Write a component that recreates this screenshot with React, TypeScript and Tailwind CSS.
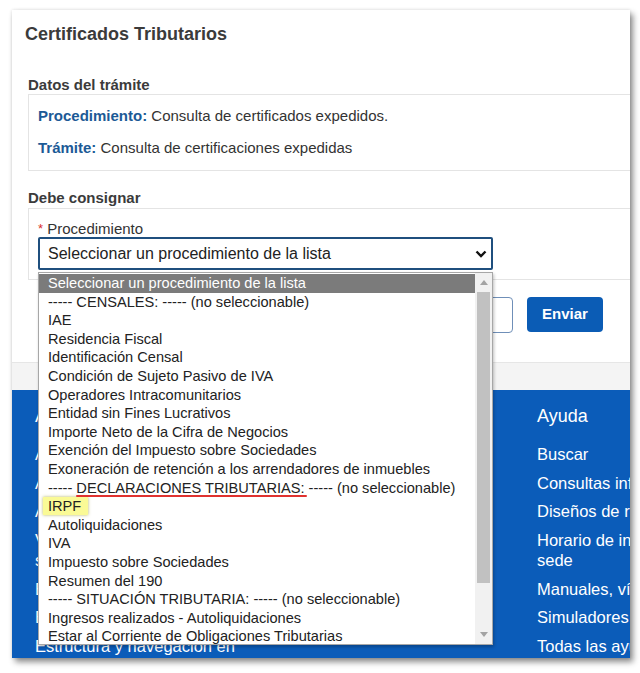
const options: string[] = [
  '----- CENSALES: ----- (no seleccionable)',
  'IAE',
  'Residencia Fiscal',
  'Identificación Censal',
  'Condición de Sujeto Pasivo de IVA',
  'Operadores Intracomunitarios',
  'Entidad sin Fines Lucrativos',
  'Importe Neto de la Cifra de Negocios',
  'Exención del Impuesto sobre Sociedades',
  'Exoneración de retención a los arrendadores de inmuebles',
];

const options2: string[] = [
  'Autoliquidaciones',
  'IVA',
  'Impuesto sobre Sociedades',
  'Resumen del 190',
  '----- SITUACIÓN TRIBUTARIA: ----- (no seleccionable)',
  'Ingresos realizados - Autoliquidaciones',
  'Estar al Corriente de Obligaciones Tributarias',
];

function Row({ children }: { children: React.ReactNode }) {
  return <div className="h-[18.6px] leading-[18.6px] pl-[9px] whitespace-nowrap">{children}</div>;
}

function Dropdown() {
  return (
    <div className="absolute left-[26px] top-[262px] w-[455px] h-[373px] bg-white border border-[#a7a7a7] shadow-[1px_2px_3px_rgba(0,0,0,0.25)] text-[14.6px] text-[#222] overflow-hidden">
      <div className="pt-[1px] pr-[17px]">
        <div className="h-[18.6px] leading-[18.6px] pl-[9px] bg-[#7b7b7b] text-white whitespace-nowrap">
          Seleccionar un procedimiento de la lista
        </div>
        {options.map((o) => (
          <Row key={o}>{o}</Row>
        ))}
        <Row>
          ----- <span className="relative">
            DECLARACIONES TRIBUTARIAS:
            <span className="absolute left-0 right-[-2px] bottom-[-1px] h-[2px] rounded-full bg-[#e0322f]" />
          </span>{' '}
          ----- (no seleccionable)
        </Row>
        <div className="h-[18.6px] leading-[18.6px] pl-[4px]">
          <span className="inline-block h-[18px] leading-[18px] pl-[5px] pr-[7px] bg-[#fafa96] shadow-[0_0_3px_rgba(150,150,40,0.7)]">
            IRPF
          </span>
        </div>
        {options2.map((o) => (
          <Row key={o}>{o}</Row>
        ))}
      </div>
      {/* scrollbar */}
      <div className="absolute right-0 top-0 bottom-0 w-[17px] bg-[#f1f1f1] flex flex-col items-center">
        <div className="h-[19px] flex items-center justify-center">
          <svg width="8" height="5" viewBox="0 0 8 5">
            <path d="M0 5L4 0L8 5Z" fill="#a3a3a3" />
          </svg>
        </div>
        <div className="w-[13px] h-[291px] bg-[#c1c1c1]" />
        <div className="flex-1" />
        <div className="h-[19px] flex items-center justify-center">
          <svg width="8" height="5" viewBox="0 0 8 5">
            <path d="M0 0L8 0L4 5Z" fill="#a3a3a3" />
          </svg>
        </div>
      </div>
    </div>
  );
}

export default function App() {
  return (
    <div className="w-[640px] h-[673px] bg-white overflow-hidden font-['Liberation_Sans',Arial,sans-serif] text-[#333]">
      <div className="relative ml-[12px] mt-[10px] w-[618px] h-[648px] overflow-hidden bg-white shadow-[3px_4px_6px_rgba(0,0,0,0.45),0_0_3px_rgba(0,0,0,0.12)]">
        <div className="w-[760px]">
          <section className="h-[352px] pt-[13px] pl-[16px]">
            <h1 className="-ml-[3px] text-[18px] leading-[22px] font-bold text-[#3b3b3b]">Certificados Tributarios</h1>
            <h2 className="mt-[31px] text-[15px] leading-[18px] font-bold text-[#3b3b3b]">Datos del trámite</h2>
            <div className="border border-[#e4e4e4] pl-[9px] pt-[11px] pb-[12px] text-[15px] leading-[20px]">
              <p>
                <span className="font-bold text-[#1c5a96]">Procedimiento:</span> Consulta de certificados expedidos.
              </p>
              <p className="mt-[12px]">
                <span className="font-bold text-[#1c5a96]">Trámite:</span> Consulta de certificaciones expedidas
              </p>
            </div>
            <h2 className="mt-[18px] text-[15px] leading-[18px] font-bold text-[#3b3b3b]">Debe consignar</h2>
            <div className="mt-[1px] border border-[#e4e4e4] pl-[9px] pt-[11px] pb-[9px]">
              <label className="block text-[15px] leading-[17px]">
                <span className="text-[#d9302c] text-[13px] align-top">*</span> Procedimiento
              </label>
              <div className="w-[455px] h-[33px] border-2 border-[#1f4f7e] rounded-[2px] flex items-center justify-between pl-[8px] pr-[4px] text-[16px] text-[#222]">
                <span>Seleccionar un procedimiento de la lista</span>
                <svg width="12" height="8" viewBox="0 0 12 8">
                  <path d="M1.5 1.5L6 6L10.5 1.5" fill="none" stroke="#111" strokeWidth="2.4" />
                </svg>
              </div>
            </div>
            <div className="mt-[17px] flex gap-[14px] pl-[392px]">
              <button className="w-[93px] h-[36px] rounded-[4px] border border-[#6f8fb8] bg-white text-[15px] text-[#0b5cb5]">
                Volver
              </button>
              <button className="w-[76px] h-[35px] rounded-[4px] bg-[#0b5cb5] text-white text-[15px] font-bold">
                Enviar
              </button>
            </div>
          </section>
          <div className="h-[28px] bg-[#f4f4f4] border-t border-[#e6e6e6]" />
          <footer className="h-[268px] bg-[#0b5cb9] text-white flex pt-[15px]">
            <div className="pl-[23px] w-[525px] flex flex-col">
              <h3 className="text-[18px] leading-[22px]">Acerca de la sede</h3>
              <ul className="mt-[17px] flex flex-col gap-[8.7px] text-[16.5px] leading-[20px]">
                <li>Accesibilidad</li>
                <li>Aviso legal</li>
                <li>Avisos de seguridad</li>
                <li>
                  Verificación de CSV de la
                  <br />
                  sede
                </li>
                <li>Enlaces de interés</li>
                <li>Estadísticas</li>
                <li>
                  Estructura y navegación en
                  <br />
                  la sede electrónica
                </li>
              </ul>
            </div>
            <div className="flex flex-col whitespace-nowrap">
              <h3 className="text-[18px] leading-[22px]">Ayuda</h3>
              <ul className="mt-[17px] flex flex-col gap-[8.7px] text-[16.5px] leading-[20px]">
                <li>Buscar</li>
                <li>Consultas informáticas</li>
                <li>Diseños de registro</li>
                <li>
                  Horario de inicio de la
                  <br />
                  sede
                </li>
                <li>Manuales, vídeos y folletos</li>
                <li>Simuladores</li>
                <li>Todas las ayudas</li>
              </ul>
            </div>
          </footer>
        </div>
        <Dropdown />
      </div>
    </div>
  );
}
